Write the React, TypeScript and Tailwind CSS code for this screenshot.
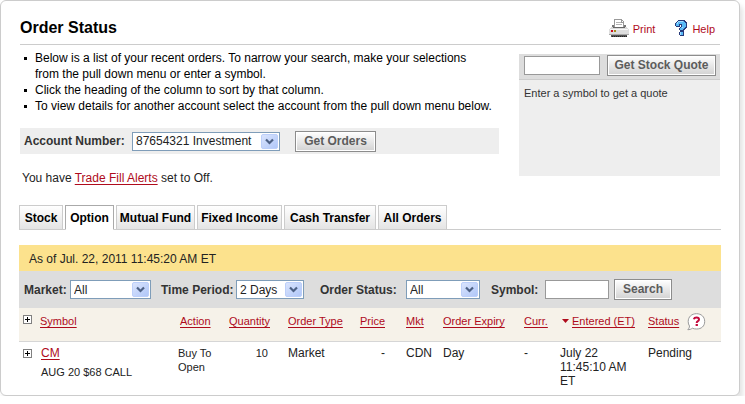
import type { ReactNode } from "react";

const link = "text-[#af0b1c] underline underline-offset-2";

function Dropdown({ id, label, className, options }: { id: string; label: string; className: string; options: string[] }) {
  return (
    <span className={`relative block h-[19px] shrink-0 ${className}`}>
      <select
        id={id}
        aria-label={label}
        className="block h-full w-full appearance-none border border-[#7f9db9] bg-white pl-[3px] text-[12px] leading-[16px] text-[#222]"
      >
        {options.map((o) => (
          <option key={o}>{o}</option>
        ))}
      </select>
      <svg className="pointer-events-none absolute top-[2px] right-[2px]" width="17" height="15" viewBox="0 0 17 15" aria-hidden="true">
        <defs>
          <linearGradient id={`${id}-face`} x1="0" y1="0" x2="1" y2="1">
            <stop offset="0" stopColor="#dbe5fd" />
            <stop offset="1" stopColor="#afc6f8" />
          </linearGradient>
        </defs>
        <rect x="0.5" y="0.5" width="16" height="14" rx="1.5" fill={`url(#${id}-face)`} stroke="#bccffa" />
        <path d="M5 5.5l3.5 3.5 3.5-3.5" fill="none" stroke="#4d6185" strokeWidth="2.2" />
      </svg>
    </span>
  );
}

function PushButton({ className, children }: { className: string; children: ReactNode }) {
  return (
    <button
      type="button"
      className={`h-[21px] shrink-0 border border-[#8c8c8c] bg-linear-to-b from-white to-[#d2d2d2] text-[12px] leading-[17px] font-bold whitespace-nowrap text-[#5c5c5c] shadow-[inset_0_0_0_1px_#fff] ${className}`}
    >
      {children}
    </button>
  );
}

function PrinterIcon() {
  return (
    <svg width="20" height="19" viewBox="0 0 20 19" shapeRendering="crispEdges" aria-hidden="true">
      <path d="M3 7h14l2 3H1z" fill="#d9d9d9" />
      <path d="M3 6h2v2H3zM15 6h2v2h-2z" fill="#777" />
      <path d="M5.5 8V0.500h7l2 2V8z" fill="#fff" stroke="#999" />
      <path d="M12 1v2h3" fill="none" stroke="#999" />
      <path d="M7 3h5v1H7zM7 5h6v1H7z" fill="#b3b3b3" />
      <path d="M4 8h12v1H4z" fill="#666" />
      <path d="M0 10h20v6H0z" fill="#dedede" />
      <path d="M1 10h18v1H1z" fill="#f8f8f8" />
      <path d="M0 15h20v1H0z" fill="#aaa" />
      <path d="M2 11h2v2H2z" fill="#d20b1d" />
      <path d="M5 11h2v2H5z" fill="#a58c1e" />
      <path d="M2 16h16v2H2z" fill="#555" />
      <path d="M3 17.500h15" stroke="#222" strokeDasharray="1 1" />
    </svg>
  );
}

function HelpIcon() {
  const mark = "M3 1h6v1h1v1h1v4h-1v1H9v1H8v1H5V8h1V7h1V4H4v2H1V3h1V2h1zM5 12h3v3H5z";
  return (
    <svg width="13" height="17" viewBox="0 0 13 17" shapeRendering="crispEdges" aria-hidden="true">
      <path d={mark} fill="none" stroke="#27397a" strokeWidth="2" strokeLinejoin="bevel" />
      <path d={mark} fill="#58b9f6" />
      <path d="M3 1h5v1H3zM2 2h1v2H2zM5 12h1v3H5zM7 7h1v1H7z" fill="#a5dcff" />
    </svg>
  );
}

function ExpandButton({ label }: { label: string }) {
  return (
    <button type="button" aria-label={label} className="block">
      <svg width="9" height="9" viewBox="0 0 9 9" shapeRendering="crispEdges" aria-hidden="true">
        <rect x="0.5" y="0.5" width="8" height="8" fill="#fff" stroke="#808080" />
        <path d="M2 4.500h5M4.500 2v5" stroke="#000" />
      </svg>
    </button>
  );
}

const tabs = [
  { name: "Stock", width: "w-[44px]" },
  { name: "Option", width: "w-[49px]" },
  { name: "Mutual Fund", width: "w-[79px]" },
  { name: "Fixed Income", width: "w-[85px]" },
  { name: "Cash Transfer", width: "w-[92px]" },
  { name: "All Orders", width: "w-[69px]" },
];

const headings = [
  { name: "Action", cell: "pl-[2px]" },
  { name: "Quantity", cell: "text-right" },
  { name: "Order Type", cell: "pl-[18px]" },
  { name: "Price", cell: "text-right" },
  { name: "Mkt", cell: "pl-[21px]" },
  { name: "Order Expiry", cell: "" },
  { name: "Curr.", cell: "" },
];

export default function App() {
  return (
    <main className="mr-[5px] rounded-[6px] border border-[#ccc] bg-white px-[18px] pb-[7px] font-['Liberation_Sans',Arial,sans-serif] text-[12px] leading-[14px] text-[#222] shadow-[3px_5px_5px_#e4e4e4]">
      <div className="mx-px">
        <header className="flex h-[44px] items-end justify-between border-b border-[#ccc] pb-[6px]">
          <h1 className="pb-[1px] text-[16px] leading-[18px] font-bold text-black">Order Status</h1>
          <nav className="flex items-center gap-[20px] pr-[5px] text-[11px]">
            <a href="#print" className="flex items-center gap-1 text-[#af0b1c]">
              <PrinterIcon />
              Print
            </a>
            <a href="#help" className="flex items-center gap-1 text-[#af0b1c]">
              <HelpIcon />
              Help
            </a>
          </nav>
        </header>

        <div className="flex gap-5">
          <div className="min-w-0 flex-1">
            <ul className="mt-[5px] leading-[16px] text-black">
              {[
                <>
                  Below is a list of your recent orders. To narrow your search, make your selections
                  <br />
                  from the pull down menu or enter a symbol.
                </>,
                "Click the heading of the column to sort by that column.",
                "To view details for another account select the account from the pull down menu below.",
              ].map((text, i) => (
                <li key={i} className="flex gap-[8px] whitespace-nowrap">
                  <span className="mt-[7px] ml-[4px] size-[3px] shrink-0 bg-black" />
                  <span>{text}</span>
                </li>
              ))}
            </ul>
            <form className="mt-[14px] flex h-[26px] items-center bg-[#eee] pl-[4px]">
              <label htmlFor="account" className="w-[108px] font-bold text-[#333]">
                Account Number:
              </label>
              <Dropdown id="account" label="Account Number" className="w-[148px]" options={["87654321 Investment"]} />
              <PushButton className="ml-[15px] w-[81px]">Get Orders</PushButton>
            </form>
            <p className="mt-[17px] pl-[2px]">
              You have{" "}
              <a href="#alerts" className={link}>
                Trade Fill Alerts
              </a>{" "}
              set to Off.
            </p>
          </div>

          <aside className="mt-[9px] h-[122px] w-[201px] shrink-0 bg-[#eee] text-[11px] text-[#333]">
            <form className="flex h-[26px] items-start justify-between border-b border-[#ccc] bg-[#ddd] pt-[1px] pr-[4px] pl-[5px]">
              <input aria-label="Quote symbol" className="mt-px h-[19px] w-[76px] border border-[#999] bg-white px-1" />
              <PushButton className="w-[109px]">Get Stock Quote</PushButton>
            </form>
            <p className="mt-[6px] pl-[5px]">Enter a symbol to get a quote</p>
          </aside>
        </div>
      </div>

      <div role="tablist" className="mt-[20px] flex h-[25px] items-end">
        {tabs.map(({ name, width }) => (
          <div key={name} className="flex">
            <button
              type="button"
              role="tab"
              aria-selected={name === "Option"}
              className={`h-[25px] border text-center font-bold whitespace-nowrap text-black ${width} ${
                name === "Option"
                  ? "border-[#aaa] border-b-white bg-white"
                  : "border-[#ccc] bg-linear-to-b from-white to-[#e4e4e4]"
              }`}
            >
              {name}
            </button>
            <span className="w-[2px] self-end border-b border-[#ccc]" />
          </div>
        ))}
        <span className="flex-1 border-b border-[#ccc]" />
      </div>

      <section className="mt-[15px]">
        <p className="flex h-[26px] items-center bg-[#fce28d] pt-[2px] pl-[10px]">As of Jul. 22, 2011 11:45:20 AM ET</p>
        <form className="flex h-[37px] items-center bg-[#ddd] pl-[5px] font-bold text-[#333]">
          <label htmlFor="market" className="w-[46px]">Market:</label>
          <Dropdown id="market" label="Market" className="w-[81px] font-normal" options={["All", "Canada", "US"]} />
          <label htmlFor="period" className="ml-[10px] w-[75px] whitespace-nowrap">Time Period:</label>
          <Dropdown id="period" label="Time Period" className="w-[68px] font-normal" options={["2 Days", "7 Days"]} />
          <label htmlFor="status" className="ml-[16px] w-[86px] whitespace-nowrap">Order Status:</label>
          <Dropdown id="status" label="Order Status" className="w-[74px] font-normal" options={["All", "Pending"]} />
          <label htmlFor="symbol" className="ml-[11px] w-[54px]">Symbol:</label>
          <input id="symbol" className="h-[19px] w-[64px] border border-[#999] bg-white px-1 font-normal" />
          <PushButton className="ml-[5px] w-[58px]">Search</PushButton>
        </form>

        <table className="w-full table-fixed border-collapse text-left">
          <colgroup>
            <col className="w-[21px]" />
            <col />
            <col className="w-[42px]" />
            <col className="w-[50px]" />
            <col className="w-[80px]" />
            <col className="w-[35px]" />
            <col className="w-[58px]" />
            <col className="w-[81px]" />
            <col className="w-[36px]" />
            <col className="w-[88px]" />
            <col className="w-[73px]" />
          </colgroup>
          <thead>
            <tr className="h-[33px] border-b border-[#d6d6d6] bg-[#f6f2e9] align-top text-[11px]">
              <td className="pt-[7px] pl-[4px]">
                <ExpandButton label="Expand all orders" />
              </td>
              <th className="pt-[6px] font-normal">
                <a href="#symbol" className={link}>Symbol</a>
              </th>
              {headings.map(({ name, cell }) => (
                <th key={name} className={`pt-[6px] font-normal whitespace-nowrap ${cell}`}>
                  <a href="#sort" className={link}>{name}</a>
                </th>
              ))}
              <th className="pt-[6px] font-normal whitespace-nowrap">
                <span className="flex items-center gap-[3px] pl-[2px]">
                  <svg width="7" height="4" viewBox="0 0 7 4" aria-hidden="true">
                    <path d="M0 0h7L3.500 4z" fill="#af0b1c" />
                  </svg>
                  <a href="#sort" className={link}>Entered (ET)</a>
                </span>
              </th>
              <th className="pt-[5px] font-normal">
                <span className="flex items-start gap-[8px]">
                  <a href="#sort" className={`${link} pt-px`}>Status</a>
                  <button type="button" aria-label="Status help">
                    <svg width="19" height="18" viewBox="0 0 19 18" aria-hidden="true">
                      <path
                        d="M9.500 0.700C14.300 0.700 17.700 3.800 17.700 8.500S14.300 16 9.700 16C8 16 6.500 15.800 5.300 15.200C4 16.300 2.500 16.700 0.800 16.700C2 15.500 2.500 14.300 2.500 13C1.600 11.800 1.200 10.300 1.200 8.500C1.200 3.800 4.700 0.700 9.500 0.700z"
                        fill="#fff"
                        stroke="#999"
                      />
                      <path d="M6.800 6.300Q7.300 4.600 9.500 4.600Q12 4.600 12 6.500Q12 7.600 10.600 8.400Q9.700 9 9.700 10" fill="none" stroke="#c40a3c" strokeWidth="2" />
                      <path d="M8.600 11h2.300v2H8.600z" fill="#c40a3c" />
                    </svg>
                  </button>
                </span>
              </th>
            </tr>
          </thead>
          <tbody>
            <tr className="align-top">
              <td className="pt-[7px] pl-[4px]">
                <ExpandButton label="Expand CM order" />
              </td>
              <td className="pt-[4px] pl-px">
                <a href="#cm" className={link}>CM</a>
                <div className="mt-[5px] text-[11px]">AUG 20 $68 CALL</div>
              </td>
              <td className="pt-[4px] text-[11px] whitespace-nowrap">Buy To<br />Open</td>
              <td className="pt-[4px] pr-[2px] text-right text-[11px]">10</td>
              <td className="pt-[4px] pl-[18px]">Market</td>
              <td className="pt-[4px] text-right">-</td>
              <td className="pt-[4px] pl-[21px]">CDN</td>
              <td className="pt-[4px]">Day</td>
              <td className="pt-[4px]">-</td>
              <td className="pt-[4px] pr-[10px]">July 22<br />11:45:10 AM<br />ET</td>
              <td className="pt-[4px]">Pending</td>
            </tr>
          </tbody>
        </table>
      </section>
    </main>
  );
}
